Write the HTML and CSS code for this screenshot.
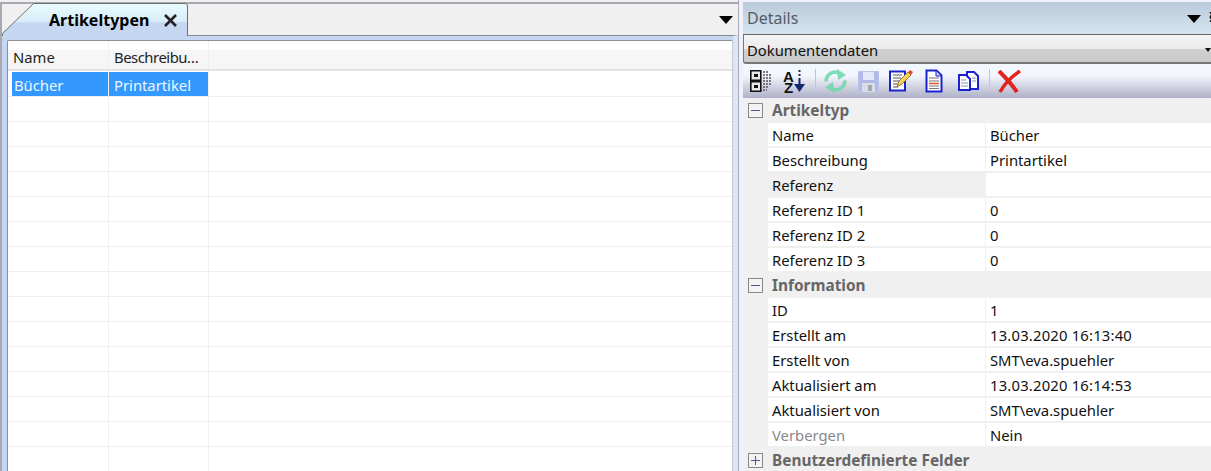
FILE: index.html
```html
<!DOCTYPE html>
<html lang="de">
<head>
<meta charset="utf-8">
<title>Artikeltypen</title>
<link rel="stylesheet" href="styles.css">
</head>
<body>
<div class="app">
  <section class="left">
    <div class="tabbar">
      <div class="tab">
        <svg class="tab-shape" width="188" height="34" viewBox="0 0 188 34">
          <defs><linearGradient id="tg" x1="0" y1="0" x2="0" y2="1"><stop offset="0" stop-color="#e9fdff"/><stop offset=".55" stop-color="#d8ecf8"/><stop offset=".6" stop-color="#c4d6f0"/><stop offset="1" stop-color="#c4d6f0"/></linearGradient></defs>
          <path d="M2.500 34 V31.500 L33.500 1.500 H185 Q187.500 1.500 187.500 4 V34" fill="url(#tg)" stroke="#6f6f6f"/>
        </svg>
        <span class="tab-label">Artikeltypen</span>
        <svg class="tab-close" width="13" height="13" viewBox="0 0 13 13"><path d="M1 1L12 12M12 1L1 12" stroke="#222" stroke-width="2.600"/></svg>
      </div>
      <svg class="menu-arrow" width="14" height="8" viewBox="0 0 14 8"><path d="M0 0H14L7 8Z" fill="#000"/></svg>
    </div>
    <div class="panel">
      <div class="grid">
        <div class="row head"><div class="c1">Name</div><div class="c2"><span class="clip">Beschreibu…</span></div><div class="c3"></div></div>
        <div class="row sel"><div class="c1"><span>Bücher</span></div><div class="c2"><span>Printartikel</span></div><div class="c3"></div></div>
        <div class="row"><div class="c1"></div><div class="c2"></div><div class="c3"></div></div>
        <div class="row"><div class="c1"></div><div class="c2"></div><div class="c3"></div></div>
        <div class="row"><div class="c1"></div><div class="c2"></div><div class="c3"></div></div>
        <div class="row"><div class="c1"></div><div class="c2"></div><div class="c3"></div></div>
        <div class="row"><div class="c1"></div><div class="c2"></div><div class="c3"></div></div>
        <div class="row"><div class="c1"></div><div class="c2"></div><div class="c3"></div></div>
        <div class="row"><div class="c1"></div><div class="c2"></div><div class="c3"></div></div>
        <div class="row"><div class="c1"></div><div class="c2"></div><div class="c3"></div></div>
        <div class="row"><div class="c1"></div><div class="c2"></div><div class="c3"></div></div>
        <div class="row"><div class="c1"></div><div class="c2"></div><div class="c3"></div></div>
        <div class="row"><div class="c1"></div><div class="c2"></div><div class="c3"></div></div>
        <div class="row"><div class="c1"></div><div class="c2"></div><div class="c3"></div></div>
        <div class="row"><div class="c1"></div><div class="c2"></div><div class="c3"></div></div>
        <div class="row"><div class="c1"></div><div class="c2"></div><div class="c3"></div></div>
        <div class="row"><div class="c1"></div><div class="c2"></div><div class="c3"></div></div>
      </div>
    </div>
  </section>
  <div class="splitter"></div>
  <section class="right">
    <header class="details-head">
      <span class="details-title">Details</span>
      <svg class="head-arrow" width="14" height="8" viewBox="0 0 14 8"><path d="M0 0H14L7 8Z" fill="#000"/></svg>
      <svg class="head-x" width="6" height="10" viewBox="0 0 6 10"><path d="M1 0L5 5M5 0L1 5M1 5L5 10M5 5L1 10" stroke="#111" stroke-width="1.500"/></svg>
    </header>
    <div class="combo"><span>Dokumentendaten</span><svg class="combo-arrow" width="6" height="4" viewBox="0 0 6 4"><path d="M0 0H6L3 4Z" fill="#111"/></svg></div>
    <div class="toolbar">
      <svg class="ico i1" width="22" height="22" viewBox="0 0 22 22">
        <path d="M.800.800h10v9.400h-10zM.800 11.800h10v9.400h-10z" fill="#e8e8e8" stroke="#111" stroke-width="1.600"/>
        <path d="M4 4h4v3H4zM4 15h4v3H4z" fill="#111"/>
        <path d="M13 2h6M13 5h8M13 8h8M13 11h8M13 14h8M13 17h6M13 20h4" stroke="#555" stroke-width="1.700" stroke-dasharray="2 1"/>
      </svg>
      <div class="ico i2">
        <span class="az">AZ</span>
        <svg class="az-arrow" width="11" height="22" viewBox="0 0 11 22">
          <path d="M5.500 0v2M5.500 4v2M5.500 8v8" stroke="#14286e" stroke-width="2"/>
          <path d="M0 14h11l-5.500 8z" fill="#14286e"/>
        </svg>
      </div>
      <span class="sep sep1"></span>
      <svg class="ico i3" width="25" height="24" viewBox="0 0 25 24">
        <path d="M3 12.500A9.500 9.500 0 0 1 16.500 4" fill="none" stroke="#7cdcb4" stroke-width="3.600"/>
        <path d="M14 0l9 6-8 5z" fill="#7cdcb4"/>
        <path d="M22 11.500A9.500 9.500 0 0 1 8.500 20" fill="none" stroke="#7cd6b0" stroke-width="3.600"/>
        <path d="M11 24l-9-6 8-5z" fill="#7cd6b0"/>
      </svg>
      <svg class="ico i4" width="21" height="21" viewBox="0 0 21 21">
        <path d="M.500.500h20v20H.500z" fill="#b0b8ec" stroke="#bcc3ea"/>
        <path d="M5 1h11v8H5z" fill="#e4e8f6"/>
        <path d="M4 12h13v9H4z" fill="#dcdde2"/>
        <path d="M10 14h4v6h-4z" fill="#a0a6bc"/>
      </svg>
      <svg class="ico i5" width="24" height="24" viewBox="0 0 24 24">
        <path d="M1 2.500h15v19H1z" fill="#fff" stroke="#1a22d0" stroke-width="2"/>
        <path d="M4 6h9M4 9h8M4 12h6M4 15h5M4 18h5" stroke="#555" stroke-width="1.200"/>
        <path d="M8 18l2-6 9-9 3 3-9 9z" fill="#f2d25a" stroke="#9a7a30"/>
        <path d="M19 3l2-2 3 2-2 3z" fill="#d84a3a"/>
      </svg>
      <svg class="ico i6" width="18" height="24" viewBox="0 0 18 24">
        <path d="M1.500 1.500h10l5 5v16h-15z" fill="#fff" stroke="#1a22d0" stroke-width="2"/>
        <path d="M11 2v5h5" fill="#cfd6f7" stroke="#1a22d0"/>
        <path d="M4 9h10M4 12h10" stroke="#777" stroke-width="1.200"/>
        <path d="M4 14.500h10" stroke="#e2502e" stroke-width="1.500"/>
        <path d="M4 17h10M4 19.500h10" stroke="#777" stroke-width="1.200"/>
      </svg>
      <svg class="ico i7" width="21" height="20" viewBox="0 0 21 20">
        <path d="M9 1h7l4 4v13H9z" fill="#fff" stroke="#1a22d0" stroke-width="2"/>
        <path d="M1 4h7l4 4v11H1z" fill="#fff" stroke="#1a22d0" stroke-width="2"/>
        <path d="M3 9h5M3 12h7M3 15h7M14 7h4M14 10h4" stroke="#8890b8"/>
      </svg>
      <span class="sep sep2"></span>
      <svg class="ico i8" width="24" height="23" viewBox="0 0 24 23">
        <path d="M2 1C7 6 14 13 20 22" fill="none" stroke="#e2231e" stroke-width="4"/>
        <path d="M23 1C14 7 8 13 3 22" fill="none" stroke="#e2231e" stroke-width="3.600"/>
      </svg>
    </div>
    <div class="props">
      <div class="group"><span class="box"><i class="h"></i></span><b>Artikeltyp</b></div>
      <div class="prop"><div class="k">Name</div><div class="v">Bücher</div></div>
      <div class="prop"><div class="k">Beschreibung</div><div class="v">Printartikel</div></div>
      <div class="prop active"><div class="k">Referenz</div><div class="v"></div></div>
      <div class="prop"><div class="k">Referenz ID 1</div><div class="v">0</div></div>
      <div class="prop"><div class="k">Referenz ID 2</div><div class="v">0</div></div>
      <div class="prop"><div class="k">Referenz ID 3</div><div class="v">0</div></div>
      <div class="group"><span class="box"><i class="h"></i></span><b>Information</b></div>
      <div class="prop"><div class="k">ID</div><div class="v">1</div></div>
      <div class="prop"><div class="k">Erstellt am</div><div class="v num">13.03.2020 16:13:40</div></div>
      <div class="prop"><div class="k">Erstellt von</div><div class="v">SMT\eva.spuehler</div></div>
      <div class="prop"><div class="k">Aktualisiert am</div><div class="v num">13.03.2020 16:14:53</div></div>
      <div class="prop"><div class="k">Aktualisiert von</div><div class="v">SMT\eva.spuehler</div></div>
      <div class="prop"><div class="k muted">Verbergen</div><div class="v">Nein</div></div>
      <div class="group"><span class="box"><i class="h"></i><i class="w"></i></span><b>Benutzerdefinierte Felder</b></div>
    </div>
  </section>
</div>
</body>
</html>
```
FILE: styles.css
```css
* { box-sizing: border-box; }
html, body { margin: 0; height: 100%; overflow: hidden; }
body { font-family: "Noto Sans", "Open Sans", sans-serif; font-size: 14.8px; color: #111; background: #f0f0f0; }
.app { display: flex; width: 1211px; height: 471px; overflow: hidden; }

.left { width: 738px; flex: none; display: flex; flex-direction: column; border-top: 2px solid #a9a9b4; border-left: 2px solid #a9a9b4; margin-top: 2px; background: #f0f0f0; }
.tabbar { height: 31px; flex: none; display: flex; align-items: center; justify-content: space-between; padding-right: 5px; }
.tab { position: relative; width: 186px; height: 31px; display: flex; align-items: center; padding: 0 0 0 47px; gap: 15px; }
.tab-shape { position: absolute; left: -2px; top: -2px; }
.tab-label { position: relative; font-weight: 700; font-size: 16px; color: #000; }
.tab-close { position: relative; margin-top: 2px; }
.menu-arrow { margin-top: 1px; }
.panel { flex: 1; min-height: 0; padding: 4px 0 0 5px; background: #c4d6f0; border-top: 1px solid #8a8a92; border-right: 5px solid #dde6f4; }
.grid { height: 100%; background: #fff; border: 1px solid #8e8e96; border-right-color: #c8c8c8; border-bottom: 0; border-radius: 2px 2px 0 0; overflow: hidden; }
.row { display: flex; height: 25px; flex: none; border-bottom: 1px solid #efefef; }
.row > div { white-space: nowrap; }
.c1 { width: 101px; flex: none; border-right: 1px solid #efefef; padding-left: 5px; }
.c2 { width: 100px; flex: none; border-right: 1px solid #efefef; padding-left: 5px; }
.c3 { flex: 1; }
.head { height: 30px; border-bottom: 2px solid #e2e2e2; background: linear-gradient(#fff 0, #fff 9px, #f6f6f6 9px, #f6f6f6); }
.head > div { line-height: 33px; color: #222; }
.clip { letter-spacing: -.45px; }
.sel { height: 26px; }
.sel > .c1, .sel > .c2 { padding-left: 0; padding-top: 1px; }
.sel > .c1 { padding-left: 4px; }
.sel span { display: block; height: 24px; background: #3399ff; color: #eef6ff; line-height: 26px; padding-left: 5px; }
.sel > .c1 span { padding-left: 2px; }

.splitter { width: 5px; flex: none; background: linear-gradient(90deg, #a9a9b4 0, #a9a9b4 1px, #eef1fb 1px); }
.right { flex: 1; min-width: 0; display: flex; flex-direction: column; background: #eef1fb; }
.details-head { height: 33px; flex: none; position: relative; display: flex; align-items: center; padding-left: 4px; margin-top: 2px; background: linear-gradient(#b9cad9, #d6e4f1); border-bottom: 1px solid #666; }
.details-title { font-size: 16px; color: #555c66; }
.head-arrow { position: absolute; left: 444px; top: 13px; }
.head-x { position: absolute; left: 466px; top: 10px; }
.combo { height: 29px; flex: none; position: relative; padding-left: 3px; line-height: 31px; color: #111; border-left: 1px solid #777; border-bottom: 2px solid #777; border-radius: 0 0 0 3px; background: linear-gradient(#f3f3f3 0, #ececec 50%, #d0d0d0 50%, #cbcbcb 100%); }
.combo-arrow { position: absolute; right: 0; top: 13px; }
.toolbar { height: 34px; flex: none; display: flex; align-items: center; padding-left: 7px; background: linear-gradient(#f3f7fe 0, #f2f5fc 35%, #aeb0c8 100%); }
.ico { flex: none; }
.i1 { margin-right: 11px; }
.i2 { display: flex; align-items: flex-start; width: 22px; height: 22px; margin-right: 10px; }
.az { writing-mode: vertical-rl; text-orientation: upright; font: 700 15px/11px "Liberation Sans", sans-serif; letter-spacing: -6px; color: #111; height: 22px; width: 11px; margin-top: -2px; }
.az-arrow { margin-left: 0; }
.sep { width: 1px; height: 24px; background: #c2c4d4; flex: none; }
.sep1 { margin-right: 7px; }
.i3 { margin-right: 10px; }
.i4 { margin-right: 10px; }
.i5 { margin-right: 12px; }
.i6 { margin-right: 15px; }
.i7 { margin-right: 10px; }
.sep2 { margin-right: 7px; }

.props { flex: 1; min-height: 0; background: #f0f0f0; }
.group { height: 25px; display: flex; align-items: center; padding-left: 5px; gap: 9px; color: #666; }
.group b { font-size: 15.400px; font-weight: 700; color: #666; }
.box { position: relative; width: 15px; height: 15px; border: 1px solid #888; background: #f3f3f3; flex: none; }
.box .h { position: absolute; left: 2px; right: 2px; top: 6px; height: 1px; background: #4a5a8a; }
.box .w { position: absolute; top: 2px; bottom: 2px; left: 6px; width: 1px; background: #4a5a8a; }
.prop { height: 25px; margin-left: 25px; display: flex; background: #fff; border-bottom: 2px solid #f0f0f0; }
.k { width: 218px; flex: none; padding-left: 4px; line-height: 24px; border-right: 1px solid #f0f0f0; }
.v { flex: 1; padding-left: 4px; line-height: 24px; }
.num { letter-spacing: .2px; }
.active .k { background: #f0f0f0; }
.muted { color: #888; }
```
